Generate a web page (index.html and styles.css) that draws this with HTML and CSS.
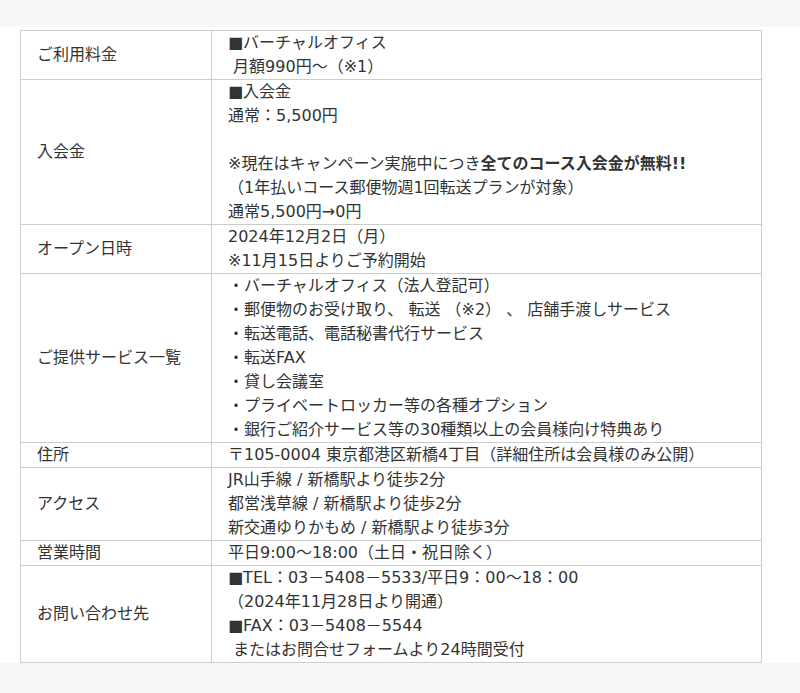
FILE: index.html
```html
<!DOCTYPE html>
<html lang="ja">
<head>
<meta charset="utf-8">
<link rel="stylesheet" href="styles.css">
</head>
<body>
<div class="top-band"></div>
<section class="info">
  <table class="info-table">
    <colgroup><col class="col-head"><col class="col-body"></colgroup>
    <tbody>
      <tr>
        <th>ご利用料金</th>
        <td>■バーチャルオフィス<br> 月額990円～（※1）</td>
      </tr>
      <tr>
        <th>入会金</th>
        <td>■入会金<br>通常：5,500円<br><br>※現在はキャンペーン実施中につき<strong>全てのコース入会金が無料!!</strong><br>（1年払いコース郵便物週1回転送プランが対象）<br>通常5,500円→0円</td>
      </tr>
      <tr>
        <th>オープン日時</th>
        <td>2024年12月2日（月）<br>※11月15日よりご予約開始</td>
      </tr>
      <tr>
        <th>ご提供サービス一覧</th>
        <td>・バーチャルオフィス（法人登記可）<br>・郵便物のお受け取り、 転送 （※2） 、 店舗手渡しサービス<br>・転送電話、電話秘書代行サービス<br>・転送FAX<br>・貸し会議室<br>・プライベートロッカー等の各種オプション<br>・銀行ご紹介サービス等の30種類以上の会員様向け特典あり</td>
      </tr>
      <tr>
        <th>住所</th>
        <td>〒105-0004 東京都港区新橋4丁目（詳細住所は会員様のみ公開）</td>
      </tr>
      <tr>
        <th>アクセス</th>
        <td>JR山手線 / 新橋駅より徒歩2分<br>都営浅草線 / 新橋駅より徒歩2分<br>新交通ゆりかもめ / 新橋駅より徒歩3分</td>
      </tr>
      <tr>
        <th>営業時間</th>
        <td>平日9:00～18:00（土日・祝日除く）</td>
      </tr>
      <tr>
        <th>お問い合わせ先</th>
        <td>■TEL：03－5408－5533/平日9：00～18：00<br>（2024年11月28日より開通）<br>■FAX：03－5408－5544<br> またはお問合せフォームより24時間受付</td>
      </tr>
    </tbody>
  </table>
</section>
<div class="bottom-band"></div>
</body>
</html>
```
FILE: styles.css
```css
html, body {
  margin: 0;
  padding: 0;
  background: #f8f8f8;
}
body {
  width: 800px;
  height: 693px;
  overflow: hidden;
  font-family: "DejaVu Sans", "Noto Sans CJK JP", sans-serif;
  font-size: 16px;
  color: #333;
}
.top-band {
  height: 27px;
}
.info {
  background: #fff;
  padding: 3px 38px 0 20px;
}
.info-table {
  width: 742px;
  border-collapse: collapse;
  table-layout: fixed;
}
.col-head { width: 191px; }
.info-table th,
.info-table td {
  border: 1px solid #ccc;
  padding: 0 16px;
  line-height: 24px;
  text-align: left;
  white-space: pre-wrap;
}
.info-table th {
  font-weight: normal;
  vertical-align: middle;
}
.info-table td {
  vertical-align: top;
}
.info-table strong {
  font-weight: bold;
}
```
